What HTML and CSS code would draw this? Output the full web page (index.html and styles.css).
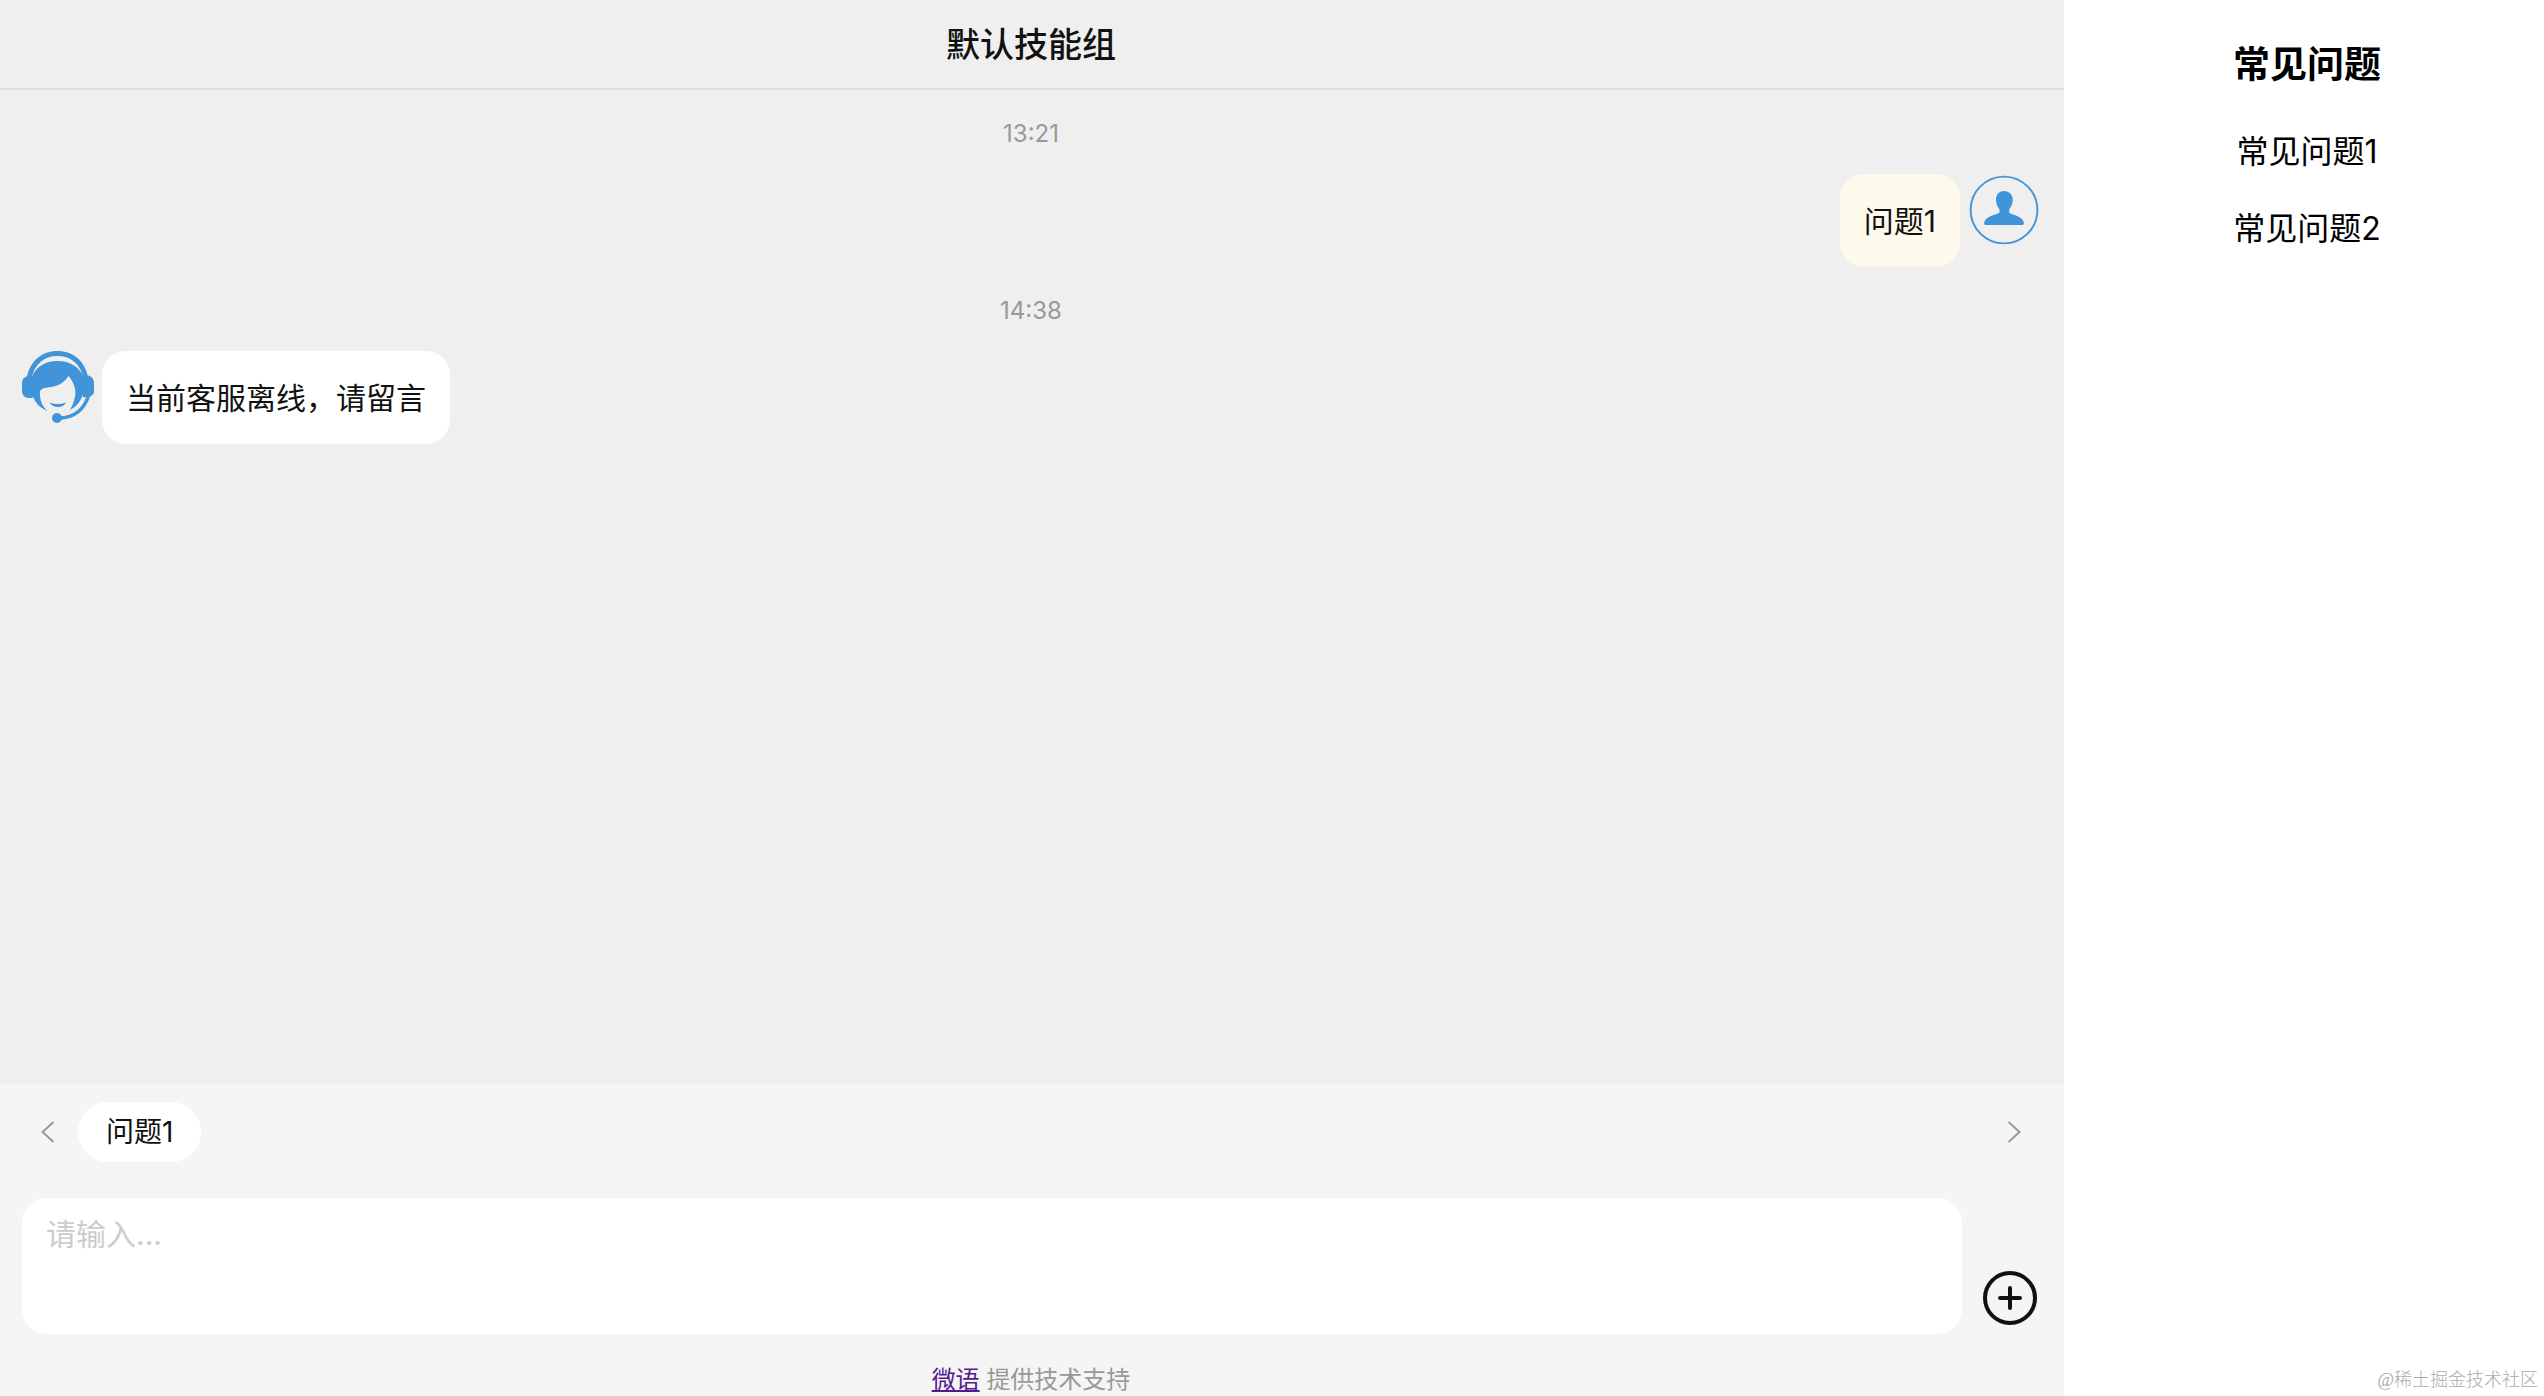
FILE: index.html
```html
<!DOCTYPE html>
<html lang="zh-CN">
<head>
<meta charset="utf-8">
<meta name="viewport" content="width=device-width, initial-scale=1">
<title>默认技能组</title>
<link rel="stylesheet" href="styles.css">
</head>
<body class="page">
<main class="chat">
  <header class="navbar"><h1 class="navbar-title">默认技能组</h1></header>
  <section class="messages" aria-label="消息">
    <time class="message-time">13:21</time>
    <div class="message message-right">
      <div class="bubble bubble-own">问题1</div>
      <svg class="avatar" viewBox="0 0 72 72" aria-hidden="true">
        <circle cx="36" cy="36" r="33.4" fill="none" stroke="#4294d8" stroke-width="1.9"/>
        <path fill="#4294d8" d="M36 17C41 17 45 20.5 44.7 26.500C44.500 30.500 43 33 41.200 35.500V38.500C42.500 40.500 53.500 41.500 55.700 48C56.200 50 55.800 51 54 51H18C16.200 51 15.800 50 16.300 48C18.500 41.500 29.500 40.500 31.500 38.500V35.500C29.500 33 28.200 30.500 28 26.500C27.700 20.500 31 17 36 17Z"/>
      </svg>
    </div>
    <time class="message-time">14:38</time>
    <div class="message">
      <svg class="avatar" viewBox="0 0 72 72" aria-hidden="true">
        <g fill="#4294d8">
          <path d="M5 26C8 10 20 0 35.500 0S63 10 66 26L61.500 27C58 12 48 5 35.500 5S13 12 9.500 27Z"/>
          <path d="M9.500 27C13 16 23 10 35.500 10S58 16 62 27V40C60 48 56 55 48 59C51.500 53 53.500 46 53.500 41C53 35 50 29 46.500 25C42 32 36 35 29 36C24 36.500 20 37 18 40C17.500 47 19 54 25.500 60C18 57 13 52 10.500 44Z"/>
          <path d="M11 25V46.500C4 48.500 0 45 0 40V32C0 27 4 24 11 25Z"/>
          <path d="M61 24.500C68 23 72 27 72 32V40C72 44 68 47 61 46Z"/>
          <path d="M27.500 51.500C33 53.500 38.500 53.500 44 51.500C41 57.500 31 57.500 27.500 51.500Z"/>
          <circle cx="35" cy="67" r="5"/>
        </g>
        <path d="M66.500 45C62 58 53 66 39 67" fill="none" stroke="#4294d8" stroke-width="3.500"/>
      </svg>
      <div class="bubble">当前客服离线，请留言</div>
    </div>
  </section>
  <footer class="chat-footer">
    <div class="quick-replies">
      <button class="arrow" type="button" aria-label="上一组"><svg width="14" height="22" viewBox="0 0 14 22"><path d="M12.500 1L1.500 11L12.500 21"/></svg></button>
      <button class="quick-reply" type="button">问题1</button>
      <button class="arrow arrow-next" type="button" aria-label="下一组"><svg width="14" height="22" viewBox="0 0 14 22"><path d="M1.500 1L12.500 11L1.500 21"/></svg></button>
    </div>
    <form class="composer">
      <textarea class="composer-input" aria-label="消息输入" placeholder="请输入..."></textarea>
      <button class="composer-more" type="button" aria-label="更多">
        <svg width="54" height="54" viewBox="0 0 54 54"><circle cx="27" cy="27" r="25"/><path d="M27 17V37M17 27H37"/></svg>
      </button>
    </form>
    <p class="support"><a class="support-link" href="#">微语</a> 提供技术支持</p>
  </footer>
</main>
<aside class="faq">
  <h2 class="faq-title">常见问题</h2>
  <ul class="faq-list">
    <li><a class="faq-link" href="#">常见问题1</a></li>
    <li><a class="faq-link" href="#">常见问题2</a></li>
  </ul>
  <p class="watermark">@稀土掘金技术社区</p>
</aside>
</body>
</html>
```
FILE: styles.css
```css
* {
  box-sizing: border-box;
}

.page {
  display: flex;
  min-height: 100vh;
  margin: 0;
  background: #fff;
  color: #111;
  font-family: Inter, "Noto Sans CJK SC", sans-serif;
}

button,
textarea {
  border: 0;
  color: inherit;
  font-family: inherit;
}

button {
  padding: 0;
  background: none;
  cursor: pointer;
}

svg {
  display: block;
}

.chat {
  display: flex;
  flex: 1;
  flex-direction: column;
  min-width: 0;
  background: #efefef;
}

.navbar {
  display: flex;
  align-items: center;
  justify-content: center;
  height: 90px;
  padding: 2px 2px 0 0;
  border-bottom: 2px solid #dcdcdc;
}

.navbar-title {
  margin: 0;
  font-size: 34px;
  font-weight: 500;
  line-height: 48px;
}

.messages {
  display: flex;
  flex: 1;
  flex-direction: column;
  padding: 26px 24px 22px 22px;
}

.message-time {
  margin-bottom: 22px;
  color: #999;
  font-size: 24px;
  line-height: 36px;
  text-align: center;
}

.message {
  display: flex;
  align-items: flex-start;
  gap: 8px;
  margin-bottom: 26px;
}

.message-right {
  justify-content: flex-end;
}

.avatar {
  flex: none;
  width: 72px;
  height: 72px;
}

.bubble {
  padding: 25px 24px 23px;
  border-radius: 24px;
  background: #fff;
  font-size: 30px;
  line-height: 45px;
}

.bubble-own {
  background: #fefaeb;
}

.chat-footer {
  background: #f5f5f5;
}

.quick-replies {
  display: flex;
  align-items: center;
  padding: 18px 26px 18px 24px;
}

.arrow {
  display: grid;
  place-items: center;
  width: 48px;
  height: 60px;
  fill: none;
  stroke: #999;
  stroke-width: 2;
}

.arrow-next {
  margin-left: auto;
}

.quick-reply {
  height: 60px;
  margin-left: 6px;
  padding: 0 28px;
  border-radius: 30px;
  background: #fff;
  font-size: 28px;
  line-height: 42px;
}

.composer {
  display: flex;
  align-items: flex-end;
  gap: 21px;
  padding: 18px 27px 0 22px;
}

.composer-input {
  flex: 1;
  min-width: 0;
  height: 136px;
  padding: 14px 24px;
  border-radius: 24px;
  background: #fff;
  font-size: 30px;
  line-height: 45px;
  resize: none;
}

.composer-input::placeholder {
  color: #ccc;
}

.composer-more {
  margin-bottom: 9px;
  fill: none;
  stroke: #111;
  stroke-linecap: round;
  stroke-width: 4;
}

.support {
  margin: 0;
  padding: 30px 2px 0 0;
  color: #999;
  font-size: 24px;
  line-height: 32px;
  text-align: center;
}

.support-link {
  color: #551a8b;
}

.faq {
  display: flex;
  flex: none;
  flex-direction: column;
  width: 480px;
  padding: 38px 0 4px 6px;
  color: #000;
  text-align: center;
}

.faq-title {
  margin: 0 0 36px;
  font-size: 37px;
  line-height: 54px;
}

.faq-list {
  display: grid;
  gap: 29px;
  margin: 0;
  padding: 0;
  list-style: none;
  font-size: 32px;
  line-height: 48px;
}

.faq-link {
  color: inherit;
  text-decoration: none;
}

.watermark {
  margin: auto 6px 0 0;
  color: #aaa;
  font-family: "Liberation Serif", "Noto Sans CJK SC", serif;
  font-size: 18px;
  font-weight: 300;
  line-height: 24px;
  text-align: right;
}
```
